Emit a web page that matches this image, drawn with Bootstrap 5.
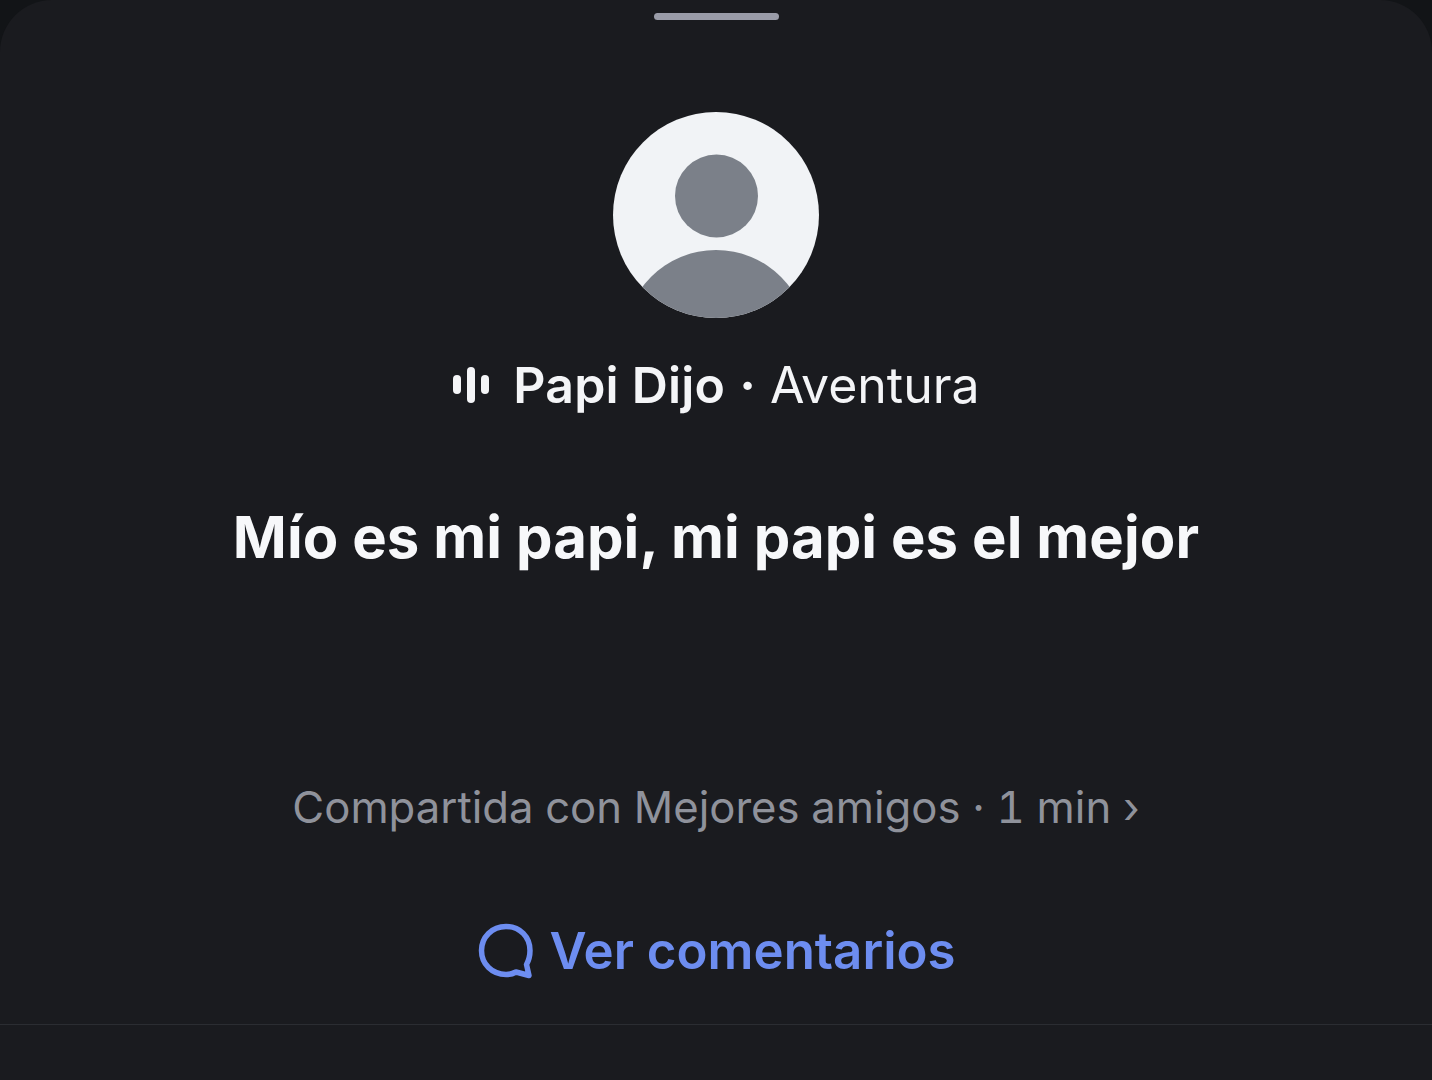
<!DOCTYPE html>
<html lang="es">
<head>
<meta charset="utf-8">
<title>Nota</title>
<link href="https://cdn.jsdelivr.net/npm/bootstrap@5.3.0/dist/css/bootstrap.min.css" rel="stylesheet">
<style>
html, body { height: 1080px; overflow: hidden; background: #121417; }
body { font-family: Inter, "Liberation Sans", sans-serif; }
.sheet { height: 1080px; background: #1a1b1f; border-radius: 52px 52px 0 0; padding-top: 13px; }
.grabber { width: 125px; height: 7px; border-radius: 4px; background: #9a9ca8; margin-bottom: 92px; }
.avatar-pic { width: 206px; height: 206px; display: block; margin-bottom: 38px; }
.author-line { height: 58px; font-size: 50px; line-height: 58px; color: #f4f5f7; margin-bottom: 88px; }
.author-name { font-weight: 600; letter-spacing: 0.2px; }
.dot-sep { margin: 0 14px; font-weight: 700; }
.wave { width: 38px; height: 38px; margin-right: 23px; }
.note-text { height: 70px; font-size: 58px; line-height: 70px; font-weight: 700; letter-spacing: 0.1px; color: #f7f8fa; margin-bottom: 211px; white-space: nowrap; }
.meta-line { height: 50px; font-size: 43.650px; line-height: 50px; color: #8f929b; font-feature-settings: "tnum"; margin-bottom: 90px; }
.comments-link { height: 56px; font-size: 51px; line-height: 56px; font-weight: 600; color: #6d8df0; margin-bottom: 45px; }
.bubble { width: 57px; height: 56px; margin-right: 16px; }
.rule-line { height: 1px; background: #2b2d32; }
</style>
</head>
<body>
<div class="sheet d-flex flex-column align-items-center">
  <div class="grabber"></div>
  <svg class="avatar-pic" viewBox="0 0 206 206" aria-hidden="true">
    <defs><clipPath id="clipAv"><circle cx="103" cy="103" r="103"/></clipPath></defs>
    <circle cx="103" cy="103" r="103" fill="#f1f3f6"/>
    <g clip-path="url(#clipAv)" fill="#7b8089">
      <circle cx="103.500" cy="84" r="41.500"/>
      <ellipse cx="103" cy="230" rx="92" ry="92"/>
    </g>
  </svg>
  <div class="author-line d-flex align-items-center">
    <svg class="wave" viewBox="0 0 38 38" aria-hidden="true" fill="#f4f5f7">
      <rect x="1" y="9" width="8" height="19" rx="4"/>
      <rect x="15" y="1" width="8" height="36" rx="4"/>
      <rect x="29" y="9" width="8" height="19" rx="4"/>
    </svg>
    <span class="author-name">Papi Dijo</span><span class="dot-sep">·</span><span>Aventura</span>
  </div>
  <div class="note-text">Mío es mi papi, mi papi es el mejor</div>
  <div class="meta-line">Compartida con Mejores amigos · 1 min ›</div>
  <div class="comments-link d-flex align-items-center">
    <svg class="bubble" viewBox="-2 0 57 56" aria-hidden="true" fill="none" stroke="#6d8df0" stroke-width="5.500" stroke-linejoin="round" stroke-linecap="round">
      <path d="M28 3.500C14 3.500 3.500 14 3.500 27.500S14 51.500 28 51.500c4 0 7-.8 10-2.500l13 3.500-2.500-11C51 37 52 32 52 27.500 52 14 42 3.500 28 3.500Z"/>
    </svg>
    <span>Ver comentarios</span>
  </div>
  <div class="rule-line w-100"></div>
</div>
<script src="https://cdn.jsdelivr.net/npm/bootstrap@5.3.0/dist/js/bootstrap.bundle.min.js"></script>
</body>
</html>
